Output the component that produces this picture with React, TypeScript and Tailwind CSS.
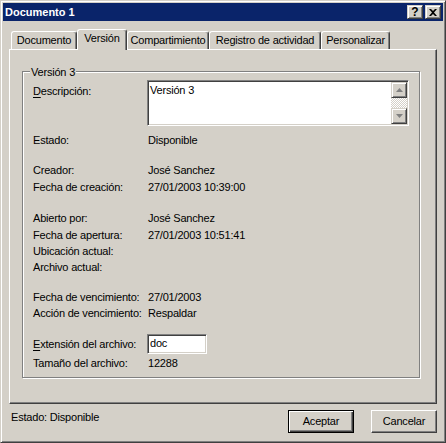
import React from "react";

function Row({ label, value, className }: { label: React.ReactNode; value?: React.ReactNode; className: string }) {
  return (
    <div className={"flex h-[16px] leading-[16px] " + className}>
      <div className="w-[115px] shrink-0 whitespace-nowrap">{label}</div>
      <div className="whitespace-nowrap">{value}</div>
    </div>
  );
}

function Arrow({ up }: { up: boolean }) {
  return (
    <svg width="7" height="4" viewBox="0 0 7 4" className="block">
      {up ? <path d="M3.5 0 L7 4 L0 4 Z" fill="#808080" /> : <path d="M0 0 L7 0 L3.5 4 Z" fill="#808080" />}
    </svg>
  );
}

const scrollBtn =
  "w-[16px] h-[16px] flex items-center justify-center bg-[#d4d0c8] border border-t-[#d4d0c8] border-l-[#d4d0c8] border-r-[#404040] border-b-[#404040] shadow-[inset_1px_1px_0_#fff,inset_-1px_-1px_0_#808080]";

const titleBtn =
  "w-[16px] h-[14px] flex items-center justify-center bg-[#d4d0c8] border border-t-[#d4d0c8] border-l-[#d4d0c8] border-r-[#404040] border-b-[#404040] shadow-[inset_1px_1px_0_#fff,inset_-1px_-1px_0_#808080]";

const sunken =
  "bg-white border border-t-[#808080] border-l-[#808080] border-r-white border-b-white shadow-[inset_1px_1px_0_#404040,inset_-1px_-1px_0_#d4d0c8]";

const tabBase =
  "text-center leading-[16px] whitespace-nowrap rounded-t-[3px] border-l border-t border-r border-l-white border-t-white border-r-[#404040] shadow-[inset_-1px_0_0_#808080] bg-[#d4d0c8]";

export default function App() {
  return (
    <div className="w-[446px] h-[443px] bg-[#d4d0c8] border border-t-[#d4d0c8] border-l-[#d4d0c8] border-r-[#404040] border-b-[#404040] shadow-[inset_1px_1px_0_#fff,inset_-1px_-1px_0_#808080] p-[2px] flex flex-col text-[11px] text-black font-['Liberation_Sans',Arial,sans-serif]">
      {/* Title bar */}
      <div className="h-[18px] shrink-0 bg-[#0a246a] flex items-center justify-between pl-[2px] pr-[2px]">
        <span className="text-white font-bold leading-[18px] whitespace-nowrap">Documento 1</span>
        <div className="flex gap-[2px]">
          <div className={titleBtn}>
            <span className="font-bold text-[12px] leading-[12px] text-black">?</span>
          </div>
          <div className={titleBtn}>
            <svg width="8" height="7" viewBox="0 0 8 7" className="block">
              <path d="M0 0 L2 0 L4 2 L6 0 L8 0 L5 3.5 L8 7 L6 7 L4 5 L2 7 L0 7 L3 3.5 Z" fill="#000" />
            </svg>
          </div>
        </div>
      </div>

      {/* Body */}
      <div className="flex-1 flex flex-col px-[6px] pt-[8px] tracking-[-0.2px]">
        {/* Tabs */}
        <div className="flex items-end h-[20px] pl-[2px]">
          <div className={tabBase + " w-[66px] h-[18px]"}>Documento</div>
          <div className={tabBase + " w-[50px] h-[21px] -mb-[1px] relative z-10"}>Versión</div>
          <div className={tabBase + " w-[82px] h-[18px]"}>Compartimiento</div>
          <div className={tabBase + " w-[112px] h-[18px]"}>Registro de actividad</div>
          <div className={tabBase + " w-[69px] h-[18px]"}>Personalizar</div>
        </div>

        {/* Panel */}
        <div className="h-[355px] shrink-0 border border-t-white border-l-white border-r-[#404040] border-b-[#404040] shadow-[inset_-1px_-1px_0_#808080]">
          <div className="relative ml-[12px] mt-[21px] w-[398px] border border-[#808080] shadow-[1px_1px_0_#fff,inset_1px_1px_0_#fff] pt-[8px] pl-[10px] pb-[6px]">
            <div className="absolute left-[7px] top-[-8px] px-[1px] bg-[#d4d0c8] leading-[16px] whitespace-nowrap">
              Versión 3
            </div>

            {/* Descripción */}
            <div className="flex items-start">
              <div className="w-[115px] shrink-0 pt-[3px] leading-[16px] whitespace-nowrap">
                <u className="underline-offset-[2px]">D</u>escripción:
              </div>
              <div className={sunken + " -ml-[1px] w-[262px] h-[46px] flex"}>
                <div className="flex-1 pl-[2px] pt-[1px] leading-[16px]">Versión 3</div>
                <div className="w-[16px] mt-[1px] mr-[1px] flex flex-col">
                  <div className={scrollBtn}>
                    <Arrow up />
                  </div>
                  <div className="h-[10px] bg-[repeating-conic-gradient(#ffffff_0_25%,#d4d0c8_0_50%)] bg-[length:2px_2px]" />
                  <div className={scrollBtn}>
                    <Arrow up={false} />
                  </div>
                </div>
              </div>
            </div>

            <Row className="mt-[6px]" label="Estado:" value="Disponible" />

            <Row className="mt-[14px]" label="Creador:" value="José Sanchez" />
            <Row className="mt-[1px]" label="Fecha de creación:" value="27/01/2003 10:39:00" />

            <Row className="mt-[15px]" label="Abierto por:" value="José Sanchez" />
            <Row className="mt-[1px]" label="Fecha de apertura:" value="27/01/2003 10:51:41" />
            <Row className="mt-0" label="Ubicación actual:" />
            <Row className="mt-0" label="Archivo actual:" />

            <Row className="mt-[14px]" label="Fecha de vencimiento:" value="27/01/2003" />
            <Row className="mt-0" label="Acción de vencimiento:" value="Respaldar" />

            <div className="flex items-center h-[20px] mt-[13px]">
              <div className="w-[115px] shrink-0 leading-[16px] whitespace-nowrap">
                <u className="underline-offset-[2px]">E</u>xtensión del archivo:
              </div>
              <div className={sunken + " -ml-[1px] w-[60px] h-[20px] pl-[2px] leading-[17px]"}>doc</div>
            </div>
            <Row className="mt-[1px]" label="Tamaño del archivo:" value="12288" />
          </div>
        </div>

        {/* Bottom */}
        <div className="mt-[6px] flex justify-between">
          <div className="pl-[2px] -mt-[1px] leading-[16px] whitespace-nowrap">Estado: Disponible</div>
          <div className="flex gap-[17px]">
            <div className="w-[66px] h-[23px] flex items-center justify-center bg-[#d4d0c8] border border-black shadow-[inset_1px_1px_0_#fff,inset_-1px_-1px_0_#404040,inset_-2px_-2px_0_#808080]">
              Aceptar
            </div>
            <div className="w-[66px] h-[23px] flex items-center justify-center bg-[#d4d0c8] border border-t-white border-l-white border-r-[#404040] border-b-[#404040] shadow-[inset_-1px_-1px_0_#808080]">
              Cancelar
            </div>
          </div>
        </div>
      </div>
    </div>
  );
}
